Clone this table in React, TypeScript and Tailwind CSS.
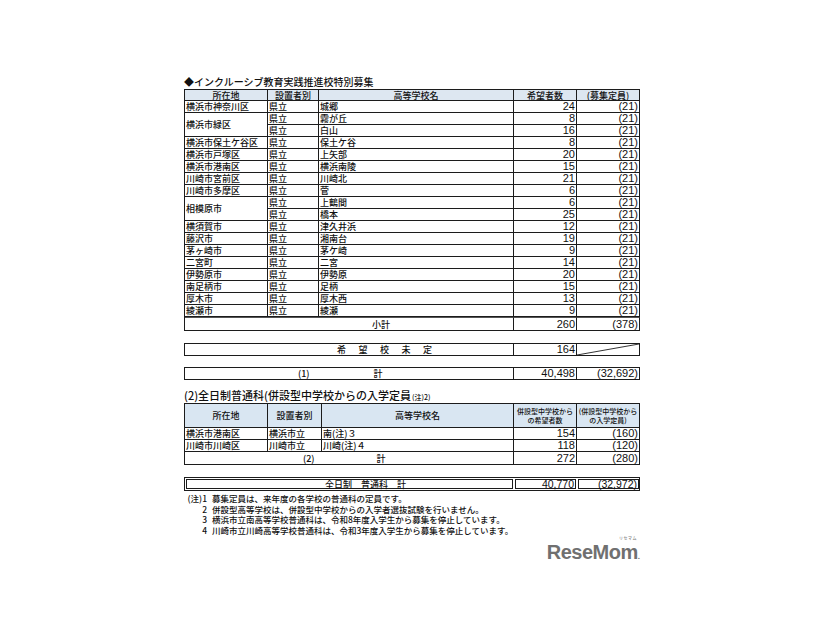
import React from "react";

type Row = { area?: string; span?: boolean; type: string; school: string; n: string; cap: string };

const rows1: Row[] = [
  { area: "横浜市神奈川区", type: "県立", school: "城郷", n: "24", cap: "(21)" },
  { area: "横浜市緑区", span: true, type: "県立", school: "霧が丘", n: "8", cap: "(21)" },
  { type: "県立", school: "白山", n: "16", cap: "(21)" },
  { area: "横浜市保土ケ谷区", type: "県立", school: "保土ケ谷", n: "8", cap: "(21)" },
  { area: "横浜市戸塚区", type: "県立", school: "上矢部", n: "20", cap: "(21)" },
  { area: "横浜市港南区", type: "県立", school: "横浜南陵", n: "15", cap: "(21)" },
  { area: "川崎市宮前区", type: "県立", school: "川崎北", n: "21", cap: "(21)" },
  { area: "川崎市多摩区", type: "県立", school: "菅", n: "6", cap: "(21)" },
  { area: "相模原市", span: true, type: "県立", school: "上鶴間", n: "6", cap: "(21)" },
  { type: "県立", school: "橋本", n: "25", cap: "(21)" },
  { area: "横須賀市", type: "県立", school: "津久井浜", n: "12", cap: "(21)" },
  { area: "藤沢市", type: "県立", school: "湘南台", n: "19", cap: "(21)" },
  { area: "茅ヶ崎市", type: "県立", school: "茅ケ崎", n: "9", cap: "(21)" },
  { area: "二宮町", type: "県立", school: "二宮", n: "14", cap: "(21)" },
  { area: "伊勢原市", type: "県立", school: "伊勢原", n: "20", cap: "(21)" },
  { area: "南足柄市", type: "県立", school: "足柄", n: "15", cap: "(21)" },
  { area: "厚木市", type: "県立", school: "厚木西", n: "13", cap: "(21)" },
  { area: "綾瀬市", type: "県立", school: "綾瀬", n: "9", cap: "(21)" },
];

const cellBase = "flex items-center border-r border-b border-[#1c1c1c] overflow-hidden whitespace-nowrap";
const jp = "text-[9px] leading-none pl-[1px]";
const num = "justify-end pr-[1px] font-['Liberation_Sans',sans-serif] text-[11px] leading-none text-[#111]";

function Jp({ children, className = "" }: { children?: React.ReactNode; className?: string }) {
  return <div className={`${cellBase} ${jp} h-[12px] ${className}`}>{children}</div>;
}
function Num({ children, className = "" }: { children?: React.ReactNode; className?: string }) {
  return <div className={`${cellBase} ${num} h-[12px] ${className}`}>{children}</div>;
}

export default function App() {
  return (
    <div className="min-h-[620px] w-[826px] bg-white font-['Noto_Sans_CJK_JP',sans-serif] font-medium text-[#111]">
      <div className="ml-[184px] w-[456px] pt-[77px] flex flex-col">
        {/* Title 1 */}
        <div className="h-[12px] flex items-start">
          <span className="text-[10px] leading-[10px]">◆インクルーシブ教育実践推進校特別募集</span>
        </div>

        {/* Table 1 */}
        <div className="grid grid-cols-[83px_51px_195px_63px_63px] border-t border-l border-[#1c1c1c]">
          <div className={`${cellBase} h-[11px] justify-center text-[9px] leading-none bg-[#dde7f1]`}>所在地</div>
          <div className={`${cellBase} h-[11px] justify-center text-[9px] leading-none bg-[#dde7f1]`}>設置者別</div>
          <div className={`${cellBase} h-[11px] justify-center text-[9px] leading-none bg-[#dde7f1]`}>高等学校名</div>
          <div className={`${cellBase} h-[11px] justify-center text-[9px] leading-none bg-[#dde7f1]`}>希望者数</div>
          <div className={`${cellBase} h-[11px] justify-center text-[9px] leading-none bg-[#dde7f1]`}>(募集定員)</div>
          {rows1.map((r, i) => (
            <React.Fragment key={i}>
              {r.area !== undefined &&
                (r.span ? (
                  <div className={`${cellBase} ${jp} row-span-2`}>{r.area}</div>
                ) : (
                  <Jp>{r.area}</Jp>
                ))}
              <Jp>{r.type}</Jp>
              <Jp>{r.school}</Jp>
              <Num>{r.n}</Num>
              <Num>{r.cap}</Num>
            </React.Fragment>
          ))}
          <div className={`${cellBase} col-span-3 h-[14px] text-[9px] leading-none pl-[187px] border-t border-t-[#555]`}>小計</div>
          <div className={`${cellBase} ${num} h-[14px] border-t border-t-[#555]`}>260</div>
          <div className={`${cellBase} ${num} h-[14px] border-t border-t-[#555]`}>(378)</div>
        </div>

        {/* 希望校未定 */}
        <div className="mt-[12px] grid grid-cols-[329px_63px_63px] border-t border-l border-[#1c1c1c]">
          <div className={`${cellBase} h-[12px] text-[9px] leading-none pl-[152px] tracking-[12.5px]`}>希望校未定</div>
          <Num>164</Num>
          <div className={`${cellBase} h-[12px] relative`}>
            <svg className="absolute inset-0 h-full w-full" viewBox="0 0 62 11" preserveAspectRatio="none">
              <line x1="0" y1="11" x2="62" y2="0" stroke="#1c1c1c" strokeWidth="0.9" />
            </svg>
          </div>
        </div>

        {/* (1) 計 */}
        <div className="mt-[11px] grid grid-cols-[329px_63px_63px] border-t border-l border-[#1c1c1c]">
          <div className={`${cellBase} h-[12px] text-[9px] leading-none`}>
            <span className="ml-[113px]">(1)</span>
            <span className="ml-[64px]">計</span>
          </div>
          <Num>40,498</Num>
          <Num>(32,692)</Num>
        </div>

        {/* Title 2 */}
        <div className="mt-[10px] h-[13px] flex items-start">
          <span className="text-[11px] leading-[11px]">
            (2)全日制普通科(併設型中学校からの入学定員
            <span className="text-[7px] ml-[1px]">(注)2)</span>
          </span>
        </div>

        {/* Table 2 */}
        <div className="grid grid-cols-[83px_54px_192px_63px_63px] border-t border-l border-[#1c1c1c]">
          <div className={`${cellBase} h-[24px] justify-center text-[9px] leading-none bg-[#d9e6f2]`}>所在地</div>
          <div className={`${cellBase} h-[24px] justify-center text-[9px] leading-none bg-[#d9e6f2]`}>設置者別</div>
          <div className={`${cellBase} h-[24px] justify-center text-[9px] leading-none bg-[#d9e6f2]`}>高等学校名</div>
          <div className={`${cellBase} h-[24px] justify-center text-center text-[7px] leading-[9px] bg-[#d9e6f2] whitespace-normal`}>
            <span>
              併設型中学校から
              <br />
              の希望者数
            </span>
          </div>
          <div className={`${cellBase} h-[24px] justify-center text-center text-[7px] leading-[9px] bg-[#d9e6f2] whitespace-normal`}>
            <span>
              (併設型中学校から
              <br />
              の入学定員)
            </span>
          </div>
          <Jp>横浜市港南区</Jp>
          <Jp>横浜市立</Jp>
          <Jp>南(注)３</Jp>
          <Num>154</Num>
          <Num>(160)</Num>
          <Jp>川崎市川崎区</Jp>
          <Jp>川崎市立</Jp>
          <Jp>川崎(注)４</Jp>
          <Num>118</Num>
          <Num>(120)</Num>
          <div className={`${cellBase} col-span-3 h-[13px] text-[9px] leading-none`}>
            <span className="ml-[118px]">(2)</span>
            <span className="ml-[62px]">計</span>
          </div>
          <div className={`${cellBase} ${num} h-[13px]`}>272</div>
          <div className={`${cellBase} ${num} h-[13px]`}>(280)</div>
        </div>

        {/* 全日制 普通科 計 */}
        <div className="mt-[12px] border border-[#1c1c1c] p-[1px] grid grid-cols-[327px_61px_61px] gap-[2px]">
          <div className="h-[10px] border border-[#1c1c1c] flex items-center text-[9px] leading-none whitespace-nowrap">
            <span className="ml-[138px]">全日制　普通科　計</span>
          </div>
          <div className="h-[10px] border border-[#1c1c1c] flex items-center justify-end pr-[1px] font-['Liberation_Sans',sans-serif] text-[10.5px] leading-none">40,770</div>
          <div className="h-[10px] border border-[#1c1c1c] flex items-center justify-end pr-[1px] font-['Liberation_Sans',sans-serif] text-[10.5px] leading-none">(32,972)</div>
        </div>

        {/* Notes */}
        <div className="mt-[2px] grid grid-cols-[24px_1fr] gap-x-[5px] text-[8.5px] leading-[10.7px] -ml-[1px]">
          <span className="text-right">(注)1</span>
          <span>募集定員は、来年度の各学校の普通科の定員です。</span>
          <span className="text-right">2</span>
          <span>併設型高等学校は、併設型中学校からの入学者選抜試験を行いません。</span>
          <span className="text-right">3</span>
          <span>横浜市立南高等学校普通科は、令和8年度入学生から募集を停止しています。</span>
          <span className="text-right">4</span>
          <span>川崎市立川崎高等学校普通科は、令和3年度入学生から募集を停止しています。</span>
        </div>

        {/* Logo */}
        <div className="flex justify-end">
          <div className="flex flex-col items-end">
            <span className="h-[5px] mr-[3px] text-[4px] leading-[4px] text-[#888] tracking-[0.5px]">リセマム</span>
            <span className="block font-['Liberation_Sans',sans-serif] font-bold text-[20px] leading-[23px] tracking-[-0.5px] text-[#707070]">
              ReseMom<span className="text-[8px] tracking-normal">.</span>
            </span>
          </div>
        </div>
      </div>
    </div>
  );
}
